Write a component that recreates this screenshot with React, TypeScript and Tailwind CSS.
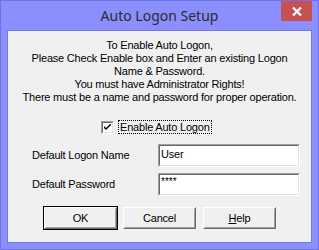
import React, { useState } from 'react';

const sunken = 'border-t-[#a0a0a0] border-l-[#a0a0a0] border-b-white border-r-white';

function ClassicButton({ label, isDefault }: { label: React.ReactNode; isDefault?: boolean }) {
  return (
    <button
      type="button"
      className={`w-[75px] h-[24px] p-0 bg-[#f0f0f0] ${isDefault ? 'border border-black' : 'border border-transparent'}`}
    >
      <div className="w-full h-full border border-t-white border-l-white border-b-[#696969] border-r-[#696969]">
        <div className="w-full h-full flex items-center justify-center border border-t-[#f0f0f0] border-l-[#f0f0f0] border-b-[#a0a0a0] border-r-[#a0a0a0] text-black">
          {label}
        </div>
      </div>
    </button>
  );
}

function TextBox({ value, password }: { value: string; password?: boolean }) {
  return (
    <div className={`w-[142px] h-[23px] border ${sunken} bg-white`}>
      <div className="w-full h-full border border-t-[#696969] border-l-[#696969] border-b-[#e3e3e3] border-r-[#e3e3e3] flex items-start pl-[1px]">
        {password ? (
          <span className="text-[10px] leading-[12px] tracking-[0px] mt-[1px]">{value}</span>
        ) : (
          <span className="leading-[17px]">{value}</span>
        )}
      </div>
    </div>
  );
}

export default function App() {
  const [enabled, setEnabled] = useState(true);

  return (
    <div
      className="w-[319px] h-[250px] border border-[#6f72e4] bg-[#8b8efd] flex flex-col overflow-hidden"
      style={{ fontFamily: '"Liberation Sans", Arial, sans-serif' }}
    >
      {/* Title bar */}
      <div className="relative h-[29px] flex items-center justify-center">
        <span
          className="text-[14px] text-[#2b2b2b] mt-[-1px]"
          style={{ fontFamily: '"Noto Sans", "Open Sans", sans-serif' }}
        >
          Auto Logon Setup
        </span>
        <div className="absolute right-[6px] top-0 w-[31px] h-[20px] bg-[#c75050] flex items-center justify-center">
          <svg width="10" height="9" viewBox="0 0 10 9">
            <path d="M1 0.5 L9 8.5 M9 0.5 L1 8.5" stroke="white" strokeWidth="2.2" />
          </svg>
        </div>
      </div>

      {/* Client area */}
      <div className="mx-[6px] h-[213px] border border-[#7477e6] bg-[#f0f0f0] text-[11px] tracking-[-0.2px] text-black flex flex-col">
        {/* Info text */}
        <div className="pt-[8px] text-center leading-[13px]">
          <div>To Enable Auto Logon,</div>
          <div>Please Check Enable box and Enter an existing Logon</div>
          <div>Name &amp; Password.</div>
          <div>You must have Administrator Rights!</div>
          <div>There must be a name and password for proper operation.</div>
        </div>

        {/* Checkbox */}
        <div className="mt-[16px] ml-[93px] flex items-center h-[14px]">
          <button
            type="button"
            onClick={() => setEnabled(!enabled)}
            className={`w-[13px] h-[13px] p-0 border ${sunken} bg-white`}
          >
            <div className="w-full h-full border border-t-[#696969] border-l-[#696969] border-b-[#e3e3e3] border-r-[#e3e3e3] flex items-center justify-center">
              {enabled && (
                <svg width="7" height="7" viewBox="0 0 7 7">
                  <path d="M0 2 L0 4 L2 6 L7 1 L7 -1 L2 4 Z" fill="black" />
                </svg>
              )}
            </div>
          </button>
          <span className="ml-[4px] px-[1px] h-[14px] leading-[12px] border border-dotted border-black">Enable Auto Logon</span>
        </div>

        {/* Fields */}
        <div className="mt-[10px] pl-[24px] flex items-center">
          <span className="w-[126px]">Default Logon Name</span>
          <TextBox value="User" />
        </div>
        <div className="mt-[6px] pl-[24px] flex items-center">
          <span className="w-[126px]">Default Password</span>
          <TextBox value="****" password />
        </div>

        {/* Buttons */}
        <div className="mt-[10px] pl-[35px] flex">
          <ClassicButton label="OK" isDefault />
          <div className="ml-[4px]">
            <ClassicButton label="Cancel" />
          </div>
          <div className="ml-[5px]">
            <ClassicButton label={<span><span className="underline">H</span>elp</span>} />
          </div>
        </div>
      </div>
    </div>
  );
}
